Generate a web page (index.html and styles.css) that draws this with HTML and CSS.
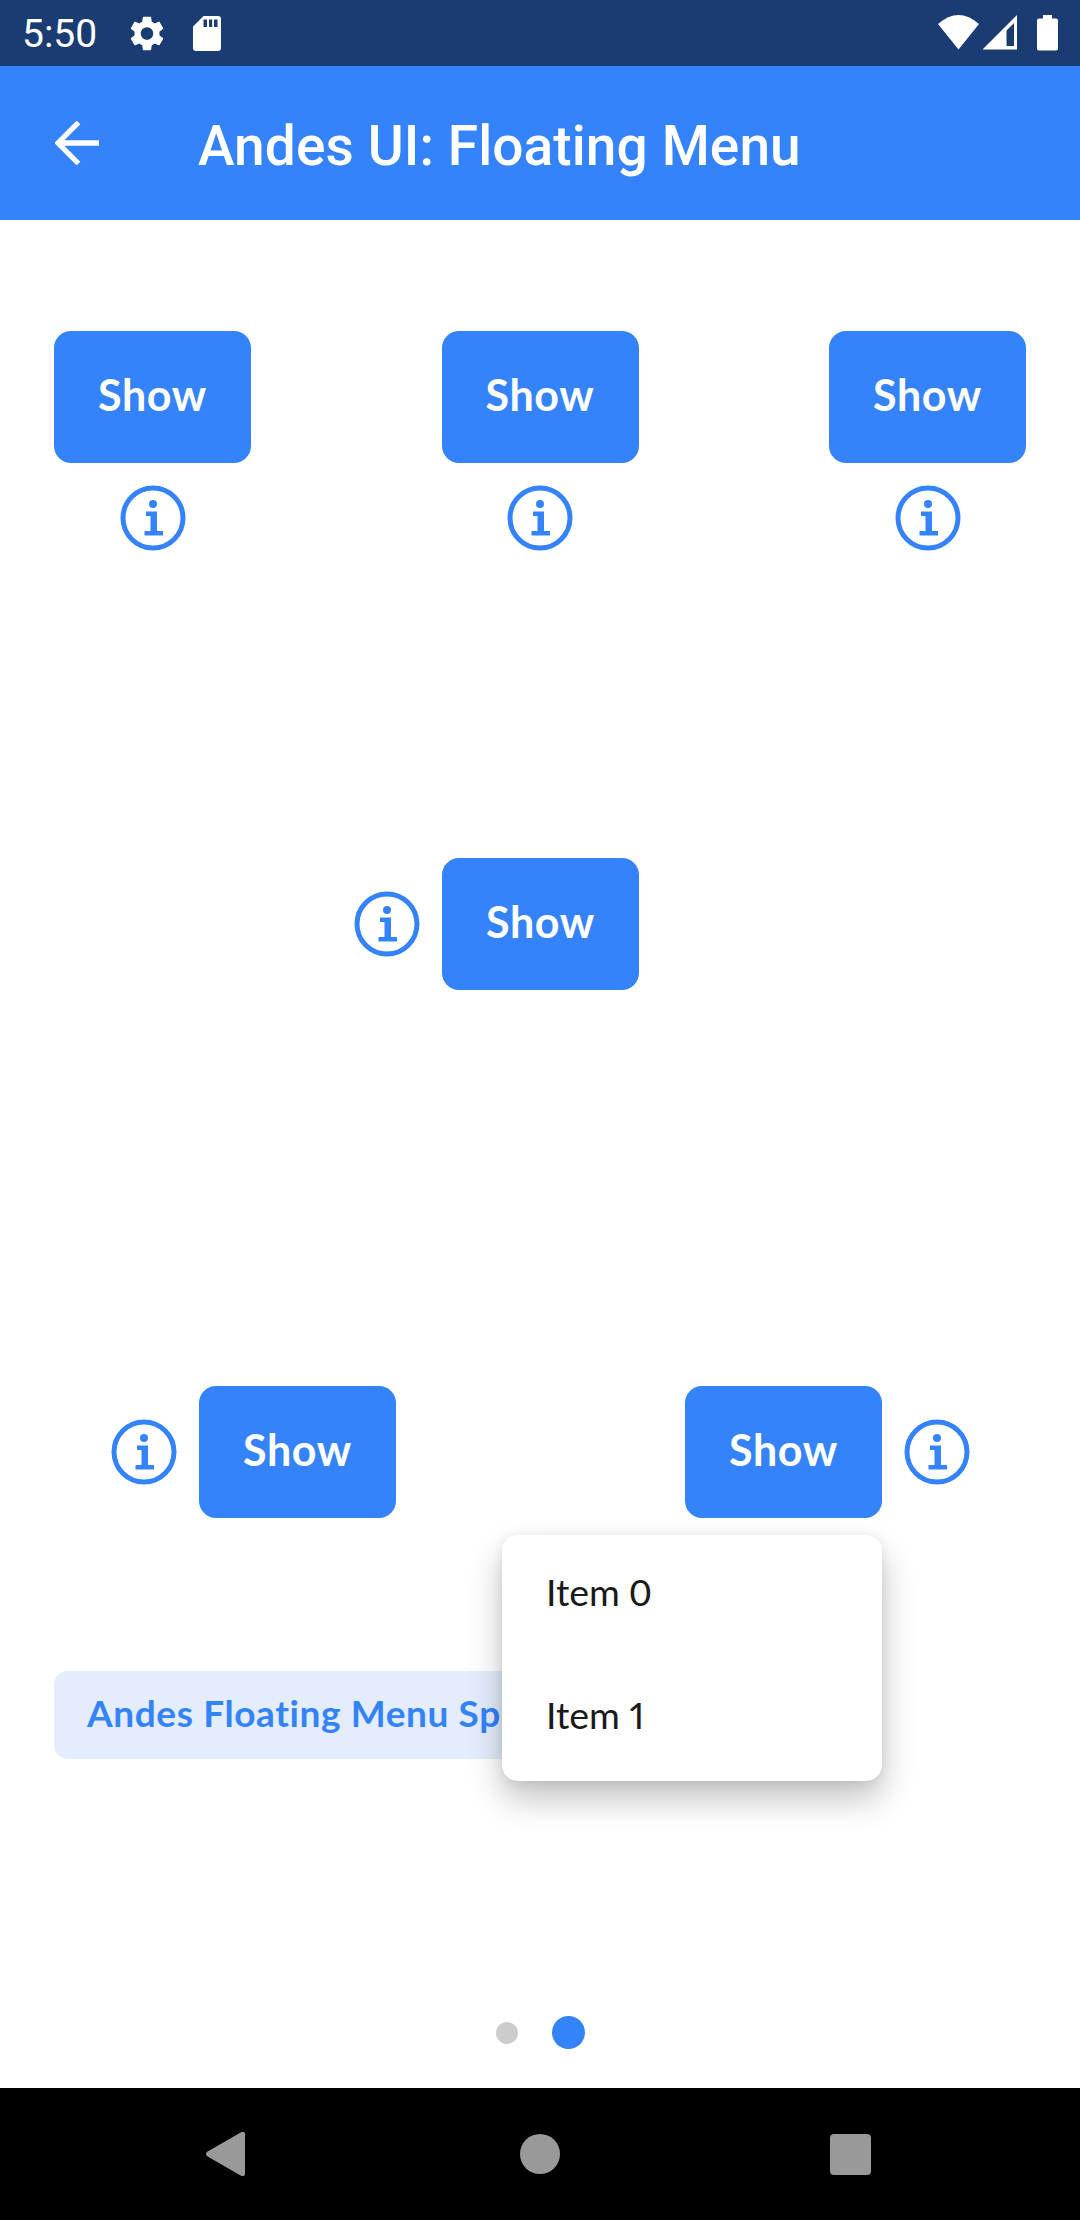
FILE: index.html
```html
<!DOCTYPE html>
<html lang="en">
<head>
<meta charset="utf-8">
<title>Andes UI: Floating Menu</title>
<link rel="stylesheet" href="styles.css">
</head>
<body>
<svg class="defs" width="0" height="0" aria-hidden="true">
  <symbol id="info" viewBox="0 0 66 66">
    <circle cx="33" cy="33" r="30" fill="none" stroke="currentColor" stroke-width="5"/>
    <circle cx="33" cy="19" r="4" fill="currentColor"/>
    <path d="M26 26.500h11v19.500h6v4.500H24.500v-4.500h6V31H26z" fill="currentColor"/>
  </symbol>
</svg>
<div class="screen">
  <div class="status">
    <span class="clock">5:50</span>
    <svg class="gear" width="34" height="35" viewBox="2.200 2 19.600 20" preserveAspectRatio="none"><path fill="#fff" d="M19.140 12.940c.04-.3.060-.61.060-.94 0-.32-.02-.64-.07-.94l2.030-1.580c.18-.14.23-.41.12-.61l-1.920-3.320c-.12-.22-.37-.29-.59-.22l-2.390.96c-.5-.38-1.030-.7-1.620-.94l-.36-2.540c-.04-.24-.24-.41-.48-.41h-3.840c-.24 0-.43.17-.47.41l-.36 2.540c-.59.24-1.130.57-1.620.94l-2.390-.96c-.22-.08-.47 0-.59.22L2.740 8.870c-.12.21-.08.47.12.61l2.030 1.580c-.05.3-.09.63-.09.940s.02.640.070.940l-2.030 1.580c-.18.14-.23.41-.12.61l1.920 3.320c.12.22.37.29.59.22l2.390-.96c.5.38 1.030.7 1.620.94l.36 2.540c.05.24.24.41.48.41h3.840c.24 0 .44-.17.47-.41l.36-2.540c.59-.24 1.130-.56 1.620-.94l2.390.96c.22.08.47 0 .59-.22l1.920-3.320c.12-.22.070-.47-.12-.61l-2.010-1.580zM12 15.600c-1.980 0-3.600-1.620-3.600-3.600s1.620-3.600 3.600-3.600 3.600 1.620 3.600 3.600-1.620 3.600-3.600 3.600z"/></svg>
    <svg class="card" width="28" height="35" viewBox="0 0 28 35"><path fill="#fff" fill-rule="evenodd" d="M10.500 0H25a3 3 0 0 1 3 3v29a3 3 0 0 1-3 3H3a3 3 0 0 1-3-3V10.500zM10.500 3.500v7.500h3.500V3.500zM16 3.500v7.500h3.200V3.500zM21 3.500v7.500h3.500V3.500z"/></svg>
    <svg class="signals" width="122" height="38" viewBox="0 0 122 38"><g fill="#fff"><path d="M0 10Q20.500-8 41 10L20.500 35.500z"/><path fill-rule="evenodd" d="M44.500 35.500L79 1v34.500zM68.500 16.500V32h7.500V9z"/><path d="M105 1h9v3.500h4a2 2 0 0 1 2 2V34.500a2 2 0 0 1-2 2h-17a2 2 0 0 1-2-2v-28a2 2 0 0 1 2-2h4z"/></g></svg>
  </div>
  <header class="appbar">
    <svg width="44" height="44" viewBox="0 0 44 44"><path d="M44 22H3M23.500 1.500L3 22l20.500 20.500" fill="none" stroke="#fff" stroke-width="5.300"/></svg>
    <h1>Andes UI: Floating Menu</h1>
  </header>
  <main class="content">
    <div class="row-top">
      <div class="stack"><button class="btn">Show</button><svg class="info"><use href="#info"/></svg></div>
      <div class="stack"><button class="btn">Show</button><svg class="info"><use href="#info"/></svg></div>
      <div class="stack"><button class="btn">Show</button><svg class="info"><use href="#info"/></svg></div>
    </div>
    <div class="row-mid"><svg class="info"><use href="#info"/></svg><button class="btn">Show</button></div>
    <div class="row-low">
      <div class="pair"><svg class="info"><use href="#info"/></svg><button class="btn">Show</button></div>
      <div class="pair anchor"><button class="btn">Show</button><svg class="info"><use href="#info"/></svg>
        <ul class="menu"><li>Item 0</li><li class="narrow">Item 1</li></ul>
      </div>
    </div>
    <a class="specs">Andes Floating Menu Sp</a>
    <div class="pager"><i class="dot"></i><i class="dot on"></i></div>
  </main>
  <nav class="navbar">
    <svg width="44" height="46" viewBox="0 0 44 46"><path fill="#999" d="M1.200 20.800L35 1.200Q39 0 39 3v40q0 3-4 1.800L1.200 25.200q-2.400-2.200 0-4.400z"/></svg>
    <svg width="40" height="40" viewBox="0 0 40 40"><circle cx="20" cy="20" r="20" fill="#999"/></svg>
    <svg width="41" height="41" viewBox="0 0 41 41"><rect width="41" height="41" rx="4" fill="#999"/></svg>
  </nav>
</div>
</body>
</html>
```
FILE: styles.css
```css
* { box-sizing: border-box; }
body { margin: 0; background: #fff; }
svg { display: block; flex: none; }
.defs { position: absolute; }
.screen { width: 1080px; height: 2220px; display: flex; flex-direction: column; overflow: hidden; font-family: Lato, "Open Sans", sans-serif; font-variant-ligatures: none; }
.status { height: 66px; flex: none; background: #1a3c73; display: flex; align-items: flex-start; padding: 0 20px 0 22px; }
.clock { width: 108px; font: 400 39px/66px Roboto, sans-serif; color: #fff; padding-top: 1px; }
.gear { margin-top: 16px; }
.card { margin: 16px 0 0 29px; }
.signals { margin: 14px 0 0 auto; }
.appbar { height: 154px; flex: none; background: #3483fa; display: flex; align-items: flex-start; padding: 55px 0 0 55px; }
.appbar h1 { margin: -7px 0 0 99px; font: 500 55px/64px Roboto, sans-serif; letter-spacing: .1px; color: #fff; white-space: nowrap; }
.content { flex: 1; display: flex; flex-direction: column; padding: 111px 54px 0; }
.row-top { display: flex; justify-content: space-between; }
.stack { display: flex; flex-direction: column; align-items: center; gap: 22px; }
.btn { width: 197px; height: 132px; border: 0; border-radius: 17px; padding: 0 0 5px; background: #3483fa; color: #fff; font: 700 43px/50px Lato, sans-serif; letter-spacing: .6px; }
.info { width: 66px; height: 66px; color: #3483fa; }
.row-mid, .pair { display: flex; align-items: center; gap: 22px; }
.row-mid { margin: 307px 0 0 300px; }
.row-low { display: flex; justify-content: space-between; margin: 396px 56px 0 57px; }
.anchor { position: relative; }
.menu { position: absolute; right: 88px; top: 149px; width: 380px; height: 246px; margin: 0; padding: 0; list-style: none; background: #fff; border-radius: 16px; box-shadow: 0 18px 34px rgba(0, 0, 0, .24), 0 2px 12px rgba(0, 0, 0, .08); }
.menu li { height: 123px; padding: 0 0 10px 44px; display: flex; align-items: center; font-size: 37.5px; color: #1a1a1a; }
.menu .narrow { font-variant-numeric: proportional-nums; }
.specs { align-self: flex-start; width: 600px; height: 88px; margin-top: 153px; padding: 0 33px 5px; display: flex; align-items: center; border-radius: 14px; background: #e3edfb; color: #3483fa; font-size: 37px; font-weight: 700; letter-spacing: .6px; white-space: nowrap; }
.pager { display: flex; justify-content: center; align-items: center; gap: 34px; margin-top: 257px; }
.dot { width: 22px; height: 22px; border-radius: 50%; background: #ccc; }
.dot.on { width: 33px; height: 33px; background: #3483fa; }
.navbar { height: 132px; flex: none; background: #000; display: flex; justify-content: space-between; align-items: center; padding: 0 209px 0 206px; }
```
